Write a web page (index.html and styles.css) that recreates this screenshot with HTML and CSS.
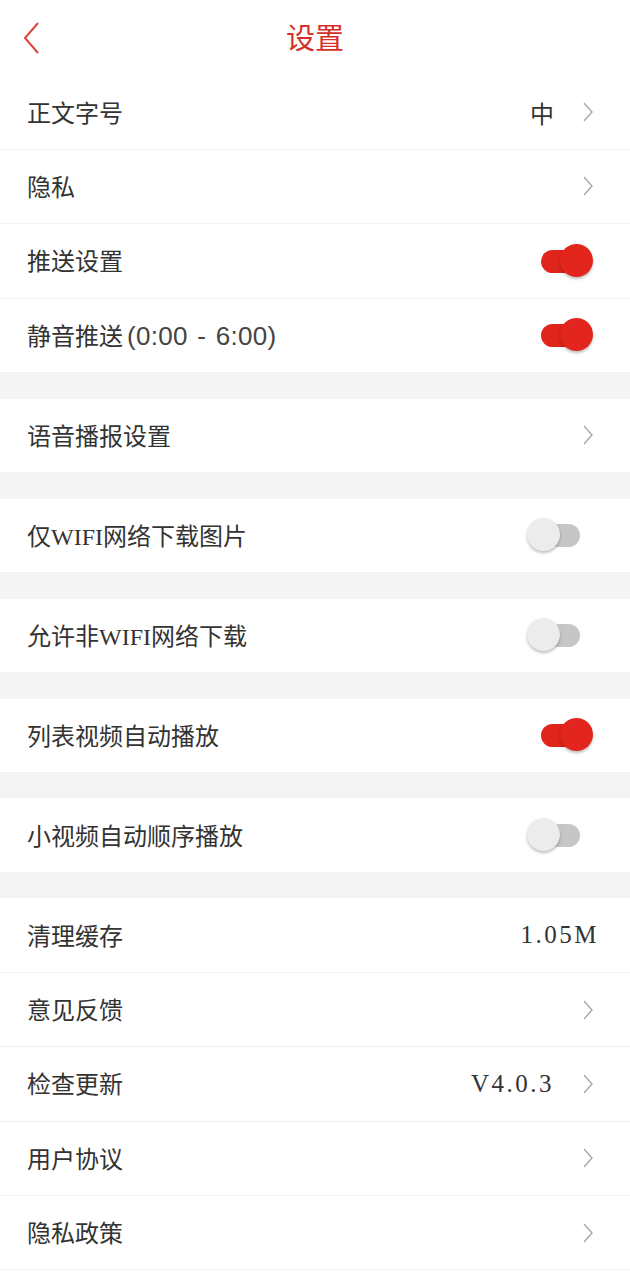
FILE: index.html
```html
<!DOCTYPE html>
<html lang="zh">
<head>
  <meta charset="UTF-8">
  <title>设置</title>
  <link rel="stylesheet" href="styles.css">
</head>
<body>
  <div class="header">
    <svg class="back" width="18" height="32" viewBox="0 0 18 32">
      <path d="M15 1 L2 16 L15 31" fill="none" stroke="#d9443d" stroke-width="2"/>
    </svg>
    <h1 class="title">设置</h1>
  </div>

  <div class="list">
    <div class="group">
      <div class="row">
        <span class="label">正文字号</span>
        <span class="right"><span class="value">中</span><svg class="arrow" width="12" height="20" viewBox="0 0 12 20"><path d="M2 1 L10 10 L2 19"/></svg></span>
      </div>
      <div class="row">
        <span class="label">隐私</span>
        <span class="right"><svg class="arrow" width="12" height="20" viewBox="0 0 12 20"><path d="M2 1 L10 10 L2 19"/></svg></span>
      </div>
      <div class="row">
        <span class="label">推送设置</span>
        <span class="switch on"></span>
      </div>
      <div class="row">
        <span class="label">静音推送<span class="latin">(0:00 - 6:00)</span></span>
        <span class="switch on"></span>
      </div>
    </div>

    <div class="group">
      <div class="row">
        <span class="label">语音播报设置</span>
        <span class="right"><svg class="arrow" width="12" height="20" viewBox="0 0 12 20"><path d="M2 1 L10 10 L2 19"/></svg></span>
      </div>
    </div>

    <div class="group">
      <div class="row">
        <span class="label">仅WIFI网络下载图片</span>
        <span class="switch"></span>
      </div>
    </div>

    <div class="group">
      <div class="row">
        <span class="label">允许非WIFI网络下载</span>
        <span class="switch"></span>
      </div>
    </div>

    <div class="group">
      <div class="row">
        <span class="label">列表视频自动播放</span>
        <span class="switch on"></span>
      </div>
    </div>

    <div class="group">
      <div class="row">
        <span class="label">小视频自动顺序播放</span>
        <span class="switch"></span>
      </div>
    </div>

    <div class="group">
      <div class="row">
        <span class="label">清理缓存</span>
        <span class="value num last">1.05M</span>
      </div>
      <div class="row">
        <span class="label">意见反馈</span>
        <span class="right"><svg class="arrow" width="12" height="20" viewBox="0 0 12 20"><path d="M2 1 L10 10 L2 19"/></svg></span>
      </div>
      <div class="row">
        <span class="label">检查更新</span>
        <span class="right"><span class="value num">V4.0.3</span><svg class="arrow" width="12" height="20" viewBox="0 0 12 20"><path d="M2 1 L10 10 L2 19"/></svg></span>
      </div>
      <div class="row">
        <span class="label">用户协议</span>
        <span class="right"><svg class="arrow" width="12" height="20" viewBox="0 0 12 20"><path d="M2 1 L10 10 L2 19"/></svg></span>
      </div>
      <div class="row">
        <span class="label">隐私政策</span>
        <span class="right"><svg class="arrow" width="12" height="20" viewBox="0 0 12 20"><path d="M2 1 L10 10 L2 19"/></svg></span>
      </div>
    </div>
  </div>
</body>
</html>
```

FILE: styles.css
```css
body {
  margin: 0;
  padding: 0;
  background-color: #ffffff;
  font-family: "Liberation Serif", "Noto Sans CJK SC", serif;
  color: #333333;
}
.header {
  height: 75.4px;
  display: flex;
  align-items: center;
  justify-content: center;
  position: relative;
}
.back {
  position: absolute;
  left: 23px;
  top: 22px;
}
.title {
  margin: 0 0 3px 0;
  font-size: 29px;
  font-weight: normal;
  color: #d4302a;
}
.list {
  display: flex;
  flex-direction: column;
  gap: 25.6px;
  background-color: #f4f4f4;
}
.group {
  background-color: #ffffff;
}
.row {
  height: 74.4px;
  box-sizing: border-box;
  border-bottom: 1px solid #f1f1f1;
  display: flex;
  align-items: center;
  justify-content: space-between;
  padding: 0 36px 0 27px;
}
.label {
  font-size: 24px;
  margin-bottom: 2px;
}
.latin {
  font-family: "Liberation Sans", sans-serif;
  font-size: 26px;
  margin-left: 4px;
  word-spacing: 2px;
  letter-spacing: 0.3px;
  color: #444444;
}
.right {
  display: flex;
  align-items: center;
  gap: 28px;
}
.value {
  font-size: 24px;
}
.num {
  font-size: 25px;
  letter-spacing: 2.5px;
}
.last {
  margin-right: -5px;
}
.arrow path {
  fill: none;
  stroke: #a8a8a8;
  stroke-width: 1.4;
}
.switch {
  width: 66px;
  height: 34px;
  position: relative;
  margin-right: 1px;
}
.switch::before {
  content: "";
  position: absolute;
  top: 6px;
  left: 10px;
  width: 43px;
  height: 23px;
  border-radius: 12px;
  background-color: #c6c6c6;
}
.switch::after {
  content: "";
  position: absolute;
  top: 0;
  left: 0;
  width: 33px;
  height: 33px;
  border-radius: 50%;
  background-color: #ececec;
  box-shadow: 0 2px 3px rgba(0, 0, 0, 0.25);
}
.switch.on::before {
  left: 14px;
  width: 48px;
  background-color: #e0251d;
}
.switch.on::after {
  left: auto;
  right: 0;
  background-color: #e2261d;
}
```
